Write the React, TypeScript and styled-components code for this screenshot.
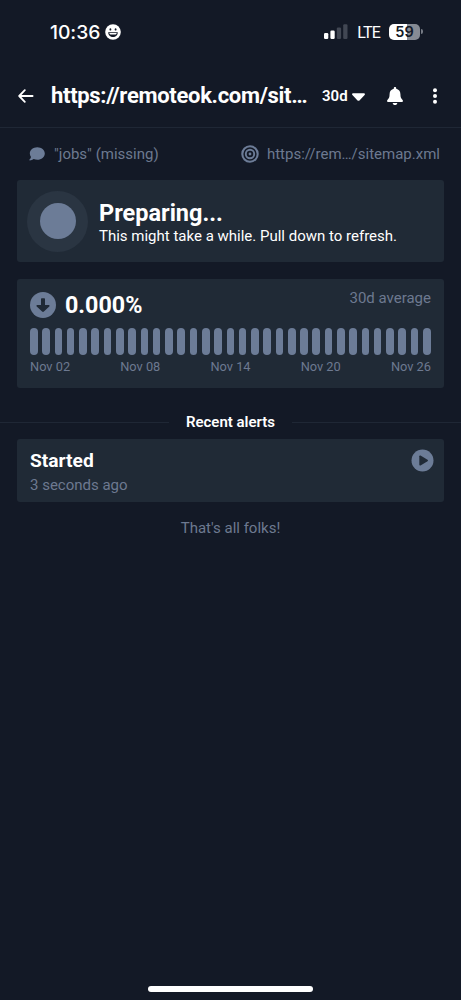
import React from "react";
import styled, { createGlobalStyle } from "styled-components";

const color = {
  page: "#131926",
  card: "#202a36",
  line: "#1f2735",
  muted: "#6d7990",
  slate: "#6c7c97",
  halo: "#2a3542",
  white: "#ffffff",
};

const GlobalStyle = createGlobalStyle`
  * { box-sizing: border-box; }
  body {
    margin: 0;
    background: ${color.page};
    color: ${color.white};
    font-family: Roboto, "Liberation Sans", sans-serif;
  }
  svg { display: block; flex: none; }
`;

const Screen = styled.div`
  width: 461px;
  height: 1000px;
  display: flex;
  flex-direction: column;
  overflow: hidden;
  background: ${color.page};
`;

const Text = styled.span<{
  $size: number;
  $weight?: number;
  $tone?: string;
  $track?: number;
  $leading?: number;
}>`
  font-size: ${(p) => p.$size}px;
  font-weight: ${(p) => p.$weight ?? 400};
  color: ${(p) => p.$tone ?? color.white};
  letter-spacing: ${(p) => p.$track ?? 0}px;
  line-height: ${(p) => p.$leading ?? 20}px;
  white-space: nowrap;
`;

const StatusBar = styled.div`
  height: 63px;
  padding: 0 38px 0 50px;
  display: flex;
  align-items: center;
  justify-content: space-between;
`;

const Clock = styled.div`
  display: flex;
  align-items: center;
  gap: 5px;
  font-family: Inter, Roboto, sans-serif;
`;

const Indicators = styled.div`
  display: flex;
  align-items: center;
`;

const Network = styled(Text)`
  margin: 2px 9px 0 9px;
`;

const Battery = styled.div`
  width: 31px;
  height: 16px;
  border-radius: 5px;
  background: linear-gradient(90deg, #fff 59%, #868b94 59%);
  color: ${color.page};
  font: 600 14.5px/16px Inter, sans-serif;
  text-align: center;
`;

const BatteryTip = styled.div`
  width: 2px;
  height: 5px;
  margin-left: 1px;
  border-radius: 0 2px 2px 0;
  background: #777c86;
`;

const Header = styled.header`
  height: 65px;
  padding: 1px 18px 0;
  display: flex;
  align-items: center;
  border-bottom: 1px solid ${color.line};
`;

const Title = styled.h1`
  width: 259px;
  margin: 0 12px 0 17px;
  font-size: 22px;
  font-weight: 700;
  line-height: 28px;
  letter-spacing: -0.31px;
  white-space: nowrap;
`;

const Range = styled.div`
  width: 65px;
  display: flex;
  align-items: center;
  gap: 4px;
`;

const Actions = styled.div`
  display: flex;
  align-items: center;
  gap: 29px;
`;

const MetaRow = styled.div`
  height: 52px;
  padding: 0 21px 0 29px;
  display: flex;
  align-items: center;
  justify-content: space-between;
`;

const MetaItem = styled.div<{ $gap: number }>`
  display: flex;
  align-items: center;
  gap: ${(p) => p.$gap}px;
`;

const Card = styled.section`
  margin: 0 17px;
  border-radius: 3px;
  background: ${color.card};
`;

const StateCard = styled(Card)`
  height: 82px;
  padding: 0 10px;
  display: flex;
  align-items: center;
  gap: 11px;
`;

const Halo = styled.div`
  width: 61px;
  height: 61px;
  border-radius: 50%;
  background: ${color.halo};
  display: grid;
  place-items: center;
`;

const Dot = styled.div`
  width: 36px;
  height: 36px;
  border-radius: 50%;
  background: ${color.slate};
`;

const Stack = styled.div<{ $top?: number }>`
  display: flex;
  flex-direction: column;
  padding-top: ${(p) => p.$top ?? 0}px;
`;

const UptimeCard = styled(Card)`
  height: 109px;
  margin-top: 17px;
  padding: 10px 13px 0;
`;

const UptimeTop = styled.div`
  height: 39px;
  display: flex;
  align-items: flex-start;
  justify-content: space-between;
`;

const Percent = styled.div`
  height: 31px;
  display: flex;
  align-items: center;
  gap: 9px;
`;

const Bars = styled.div`
  display: flex;
  justify-content: space-between;
`;

const Bar = styled.div`
  width: 7.6px;
  height: 27px;
  border-radius: 4px;
  background: ${color.slate};
`;

const Dates = styled.div`
  margin-top: 4px;
  display: flex;
  justify-content: space-between;
`;

const SectionTitle = styled.div`
  height: 51px;
  padding-top: 17px;
  display: flex;
  align-items: center;
  gap: 17px;
  &::before,
  &::after {
    content: "";
    flex: 1;
    height: 1px;
    background: ${color.line};
  }
`;

const AlertCard = styled(Card)`
  height: 63px;
  padding: 10px 10px 0 13px;
  display: flex;
  align-items: flex-start;
  justify-content: space-between;
`;

const Footer = styled.div`
  margin-top: 16px;
  text-align: center;
`;

const HomeIndicator = styled.div`
  width: 165px;
  height: 6px;
  margin: auto auto 8px 148px;
  border-radius: 3px;
  background: ${color.white};
`;

const Smiley = () => (
  <svg width="16" height="16" viewBox="0 0 16 16">
    <circle cx="8" cy="8" r="7.8" fill="#fff" />
    <ellipse cx="5.4" cy="5.4" rx="0.9" ry="1.2" fill={color.page} />
    <ellipse cx="10.6" cy="5.4" rx="0.9" ry="1.2" fill={color.page} />
    <path d="M3.2 8.2h9.600c0 2.900-2.100 4.800-4.800 4.800s-4.800-1.900-4.800-4.800Z" fill={color.page} />
    <path d="M4.300 9.100h7.400c-.2 1-.9 1.500-1.700 1.500H6c-.8 0-1.500-.5-1.700-1.500Z" fill="#fff" />
  </svg>
);

const Signal = () => (
  <svg width="24" height="15" viewBox="0 0 24 15">
    <rect x="0" y="9" width="4.3" height="6" rx="1.2" fill="#fff" />
    <rect x="6.4" y="6.5" width="4.3" height="8.5" rx="1.2" fill="#fff" />
    <rect x="12.8" y="3.5" width="4.3" height="11.5" rx="1.2" fill="#414753" />
    <rect x="19.2" y="0.3" width="4.3" height="14.7" rx="1.2" fill="#414753" />
  </svg>
);

const BackArrow = () => (
  <svg width="16" height="14" viewBox="0 0 16 14" fill="none" stroke="#fff" strokeWidth="1.8">
    <path d="M14.600 7H1.500M6.800 1.200 1.200 7l5.600 5.800" strokeLinecap="round" strokeLinejoin="round" />
  </svg>
);

const Caret = () => (
  <svg width="13" height="10" viewBox="0 0 13 10">
    <path d="M1.200 2.300h10.600c1 0 1.500 1.100.8 1.800L7.700 9.200c-.7.7-1.700.7-2.400 0L.4 4.100C-.3 3.400.2 2.300 1.200 2.300Z" fill="#fff" />
  </svg>
);

const Bell = () => (
  <svg width="16" height="18" viewBox="0 0 16 18" fill="#fff">
    <path d="M8 0c.7 0 1.200.5 1.200 1.200v.6c2.500.5 4.200 2.600 4.200 5.200 0 3.400.8 4.400 2 5.800.4.400.5.800.5 1.200 0 .6-.5 1-1.100 1H1.200C.6 15 .1 14.600.1 14c0-.4.1-.8.5-1.200 1.200-1.400 2-2.400 2-5.800 0-2.600 1.700-4.700 4.200-5.200v-.6C6.800.5 7.300 0 8 0Z" />
    <path d="M5.700 15.900h4.600C10.300 17.100 9.300 18 8 18s-2.300-.9-2.300-2.100Z" />
  </svg>
);

const More = () => (
  <svg width="6" height="16" viewBox="0 0 6 16" fill="#fff">
    <circle cx="3" cy="2.200" r="2" />
    <circle cx="3" cy="8" r="2" />
    <circle cx="3" cy="13.800" r="2" />
  </svg>
);

const Bubble = () => (
  <svg width="16" height="14" viewBox="0 0 16 14" fill={color.slate}>
    <path d="M8.300.2C12.500.2 15.800 3 15.800 6.500s-3.300 6.300-7.500 6.300c-1.300 0-2.500-.3-3.600-.8-1.100.8-2.400 1.400-3.900 1.400-.5 0-.6-.5-.3-.8.7-.8 1.300-1.700 1.500-2.700C1.200 9 .8 7.800.8 6.500.8 3 4.100.2 8.300.2Z" />
  </svg>
);

const Target = () => (
  <svg width="18" height="18" viewBox="0 0 18 18" fill="none" stroke={color.slate}>
    <circle cx="9" cy="9" r="7.700" strokeWidth="2.100" />
    <circle cx="9" cy="9" r="4.200" strokeWidth="1.900" />
    <circle cx="9" cy="9" r="1.400" fill={color.slate} stroke="none" />
  </svg>
);

const DownBadge = () => (
  <svg width="26" height="26" viewBox="0 0 26 26">
    <circle cx="13" cy="13" r="13" fill={color.slate} />
    <path
      d="M11 7.200c0-.6.4-1 1-1h2c.6 0 1 .4 1 1v5.900h3.800c.8 0 1 .8.500 1.300l-5.400 5.100c-.5.500-1.300.5-1.800 0l-5.400-5.100c-.5-.5-.3-1.300.5-1.300H11z"
      fill={color.card}
    />
  </svg>
);

const PlayBadge = () => (
  <svg width="23" height="23" viewBox="0 0 23 23">
    <circle cx="11.500" cy="11.500" r="11" fill={color.slate} />
    <path d="M8.300 7.200c0-.7.600-1 1.200-.7l7 4.200c.6.400.6 1.200 0 1.600l-7 4.200c-.6.300-1.200 0-1.200-.7z" fill={color.card} />
  </svg>
);

const dates = ["Nov 02", "Nov 08", "Nov 14", "Nov 20", "Nov 26"];
const days = Array.from({ length: 33 }, (_, i) => i);

export default function App() {
  return (
    <Screen>
      <GlobalStyle />
      <StatusBar>
        <Clock>
          <Text $size={19.3} $weight={500} $track={-0.05}>10:36</Text>
          <Smiley />
        </Clock>
        <Indicators>
          <Signal />
          <Network $size={16} $track={-0.8}>LTE</Network>
          <Battery>59</Battery>
          <BatteryTip />
        </Indicators>
      </StatusBar>

      <Header>
        <BackArrow />
        <Title>https://remoteok.com/sit…</Title>
        <Range>
          <Text $size={15} $weight={600}>30d</Text>
          <Caret />
        </Range>
        <Actions>
          <Bell />
          <More />
        </Actions>
      </Header>

      <MetaRow>
        <MetaItem $gap={9}>
          <Bubble />
          <Text $size={15} $tone={color.muted}>"jobs" (missing)</Text>
        </MetaItem>
        <MetaItem $gap={8}>
          <Target />
          <Text $size={15} $tone={color.muted}>https://rem…/sitemap.xml</Text>
        </MetaItem>
      </MetaRow>

      <StateCard>
        <Halo>
          <Dot />
        </Halo>
        <Stack $top={4}>
          <Text $size={23.5} $weight={700} $leading={26}>Preparing...</Text>
          <Text $size={15} $leading={20}>This might take a while. Pull down to refresh.</Text>
        </Stack>
      </StateCard>

      <UptimeCard>
        <UptimeTop>
          <Percent>
            <DownBadge />
            <Text $size={23.3} $weight={700} $leading={22}>0.000%</Text>
          </Percent>
          <Text $size={15} $leading={19} $tone={color.muted}>30d average</Text>
        </UptimeTop>
        <Bars>
          {days.map((day) => (
            <Bar key={day} />
          ))}
        </Bars>
        <Dates>
          {dates.map((date) => (
            <Text key={date} $size={12.8} $leading={16} $tone={color.muted}>{date}</Text>
          ))}
        </Dates>
      </UptimeCard>

      <SectionTitle>
        <Text $size={15} $weight={600}>Recent alerts</Text>
      </SectionTitle>

      <AlertCard>
        <Stack>
          <Text $size={19.2} $weight={700} $leading={24}>Started</Text>
          <Text $size={15} $leading={24} $tone={color.muted}>3 seconds ago</Text>
        </Stack>
        <PlayBadge />
      </AlertCard>

      <Footer>
        <Text $size={15} $tone={color.muted}>That's all folks!</Text>
      </Footer>

      <HomeIndicator />
    </Screen>
  );
}
